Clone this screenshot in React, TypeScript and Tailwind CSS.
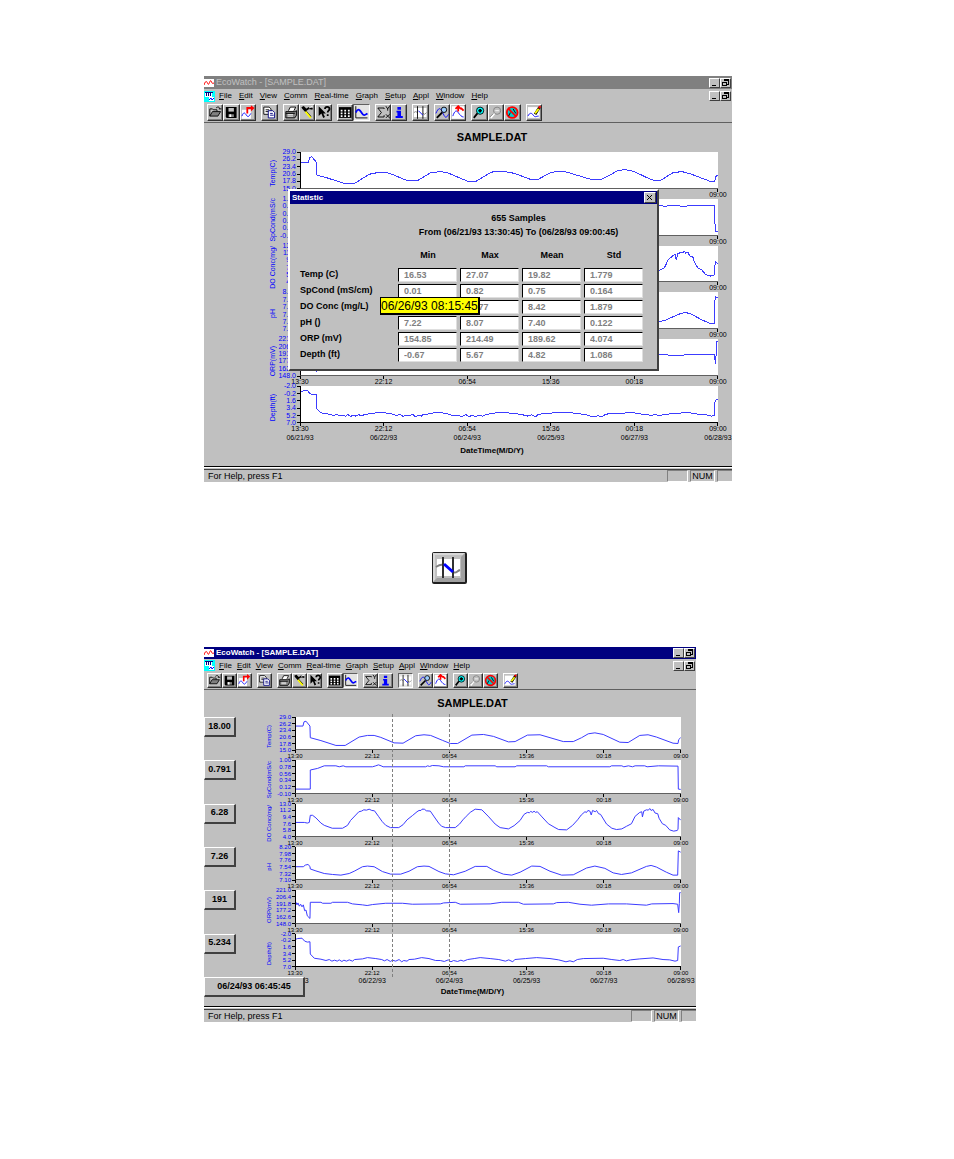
import React from 'react';
import clsx from 'clsx';

type Series = {
  axis: string;
  ticks: string[];
  points: string;
  reading: string;
};

const SERIES: Series[] = [
  {
    axis: 'Temp(C)',
    ticks: ['29.0', '26.2', '23.4', '20.6', '17.8', '15.0'],
    reading: '18.00',
    points:
      '0,28 21,28 24,15 30,13 42,28 43,64 75,73 120,88 148,88 190,62 215,57 235,57 255,63 295,80 322,81 360,58 385,55 405,57 440,72 464,82 486,82 529,56 564,54 594,60 639,77 659,76 696,56 734,55 804,76 834,76 859,64 879,52 899,49 924,54 974,78 999,79 1034,57 1059,55 1084,62 1134,81 1149,82 1151,70 1157,64',
  },
  {
    axis: 'SpCond(mS/c',
    ticks: ['1.00', '0.78', '0.56', '0.34', '0.12', '-0.10'],
    reading: '0.791',
    points:
      '0,90 43,90 43,31 65,26 85,18 120,18 130,21 142,18 150,21 230,21 240,18 248,15 256,18 262,21 390,21 396,18 402,20 410,17 430,18 444,21 505,21 509,18 599,18 604,21 659,21 664,18 754,18 759,21 944,21 949,18 980,18 986,21 1000,18 1012,21 1020,18 1049,18 1056,21 1090,18 1149,19 1150,90 1157,91',
  },
  {
    axis: 'DO Conc(mg/',
    ticks: ['13.0', '11.2', '9.4', '7.6', '5.8', '4.0'],
    reading: '6.28',
    points:
      '0,57 25,57 34,59 40,57 43,35 50,35 60,43 75,59 85,66 109,75 140,75 155,66 164,51 189,24 197,22 204,18 212,19 220,16 228,20 236,21 248,38 259,54 270,66 284,73 309,73 322,64 334,49 350,36 364,24 370,20 376,20 379,16 386,16 392,21 404,22 416,40 429,59 438,69 450,73 479,73 492,62 502,49 512,38 524,26 539,16 559,18 580,40 599,62 614,73 639,77 656,67 674,51 686,32 696,26 702,27 706,23 712,26 716,22 720,26 726,24 740,40 759,61 779,73 790,79 814,80 832,66 847,49 858,34 869,24 874,26 878,20 884,22 888,34 892,20 900,24 904,20 910,30 916,32 934,62 950,75 964,79 980,77 994,69 1009,61 1020,38 1034,26 1040,24 1042,40 1046,22 1054,18 1060,19 1064,14 1068,20 1074,17 1080,28 1088,30 1092,44 1102,61 1112,66 1124,80 1136,84 1146,82 1149,79 1150,42 1157,50',
  },
  {
    axis: 'pH',
    ticks: ['8.20', '7.98', '7.76', '7.54', '7.32', '7.10'],
    reading: '7.26',
    points:
      '0,61 22,61 28,56 36,54 42,60 43,68 60,74 85,82 110,85 135,87 160,82 175,75 200,61 215,59 235,61 260,76 285,84 315,84 340,75 365,61 385,59 400,60 430,76 449,83 474,86 509,75 539,60 574,60 594,72 624,84 649,87 674,78 709,59 734,60 764,75 799,87 834,86 874,65 899,59 929,66 954,80 979,85 1009,80 1054,60 1068,57 1084,62 1114,78 1134,87 1148,87 1150,12 1157,16',
  },
  {
    axis: 'ORP(mV)',
    ticks: ['221.0', '206.4', '191.8', '177.2', '162.6', '148.0'],
    reading: '191',
    points:
      '0,38 3,46 6,40 10,50 14,44 18,52 22,46 26,64 30,62 34,80 42,88 43,38 75,38 80,41 105,41 110,38 155,38 170,43 200,46 214,48 230,45 270,41 320,41 350,44 434,43 444,40 479,38 494,44 584,43 619,38 669,38 684,44 774,43 784,39 819,38 854,44 889,47 940,43 994,43 1054,47 1070,43 1134,42 1148,44 1151,70 1153,42 1154,8 1157,8',
  },
  {
    axis: 'Depth(ft)',
    ticks: ['-2.0', '-0.2', '1.6', '3.4', '5.2', '7.0'],
    reading: '5.234',
    points:
      '0,16 5,14 18,13 26,22 34,25 42,24 43,62 55,75 75,78 90,82 100,79 108,84 116,81 124,84 130,80 138,85 144,81 152,84 160,80 170,84 176,79 200,77 215,73 240,76 258,79 266,83 274,79 284,85 290,81 300,84 310,79 318,86 324,82 334,84 340,79 356,78 378,73 400,76 420,82 434,82 446,85 458,80 466,86 474,82 486,85 496,81 504,84 516,79 536,76 554,73 584,76 610,79 630,84 640,80 652,86 658,79 690,76 724,73 764,76 790,80 812,86 824,83 834,86 846,79 864,76 924,75 950,79 974,82 984,79 994,83 1006,80 1034,77 1074,74 1104,79 1124,80 1140,84 1148,82 1150,40 1157,37',
  },
];

const TIMES = ['13:30', '22:12', '06:54', '15:36', '00:18', '09:00'];
const DATES = ['06/21/93', '06/22/93', '06/24/93', '06/25/93', '06/27/93', '06/28/93'];
const MENU = ['File', 'Edit', 'View', 'Comm', 'Real-time', 'Graph', 'Setup', 'Appl', 'Window', 'Help'];

const STATS: { name: string; values: string[] }[] = [
  { name: 'Temp (C)', values: ['16.53', '27.07', '19.82', '1.779'] },
  { name: 'SpCond (mS/cm)', values: ['0.01', '0.82', '0.75', '0.164'] },
  { name: 'DO Conc (mg/L)', values: ['5.46', '12.77', '8.42', '1.879'] },
  { name: 'pH ()', values: ['7.22', '8.07', '7.40', '0.122'] },
  { name: 'ORP (mV)', values: ['154.85', '214.49', '189.62', '4.074'] },
  { name: 'Depth (ft)', values: ['-0.67', '5.67', '4.82', '1.086'] },
];
const STAT_COLUMNS = ['Min', 'Max', 'Mean', 'Std'];

type ToolId =
  | 'open' | 'save' | 'export' | 'copy' | 'print' | 'tools' | 'context' | 'grid' | 'graph'
  | 'sigma' | 'info' | 'limits' | 'zoomgraph' | 'center' | 'zoomin' | 'zoomout' | 'nozoom' | 'edit';

const TOOLS: (ToolId | null)[] = [
  'open', 'save', 'export', null, 'copy', null, 'print', 'tools', 'context', null, 'grid', 'graph', null,
  'sigma', 'info', null, 'limits', null, 'zoomgraph', 'center', null, 'zoomin', 'zoomout', 'nozoom', null, 'edit',
];

const GLYPHS: Record<ToolId, React.ReactNode> = {
  open: (
    <>
      <path d="M2 12V4h3l1 1h4v2" stroke="#000" />
      <path d="M2 12l3-5h9l-3 5z" fill="#808080" stroke="#000" />
      <path d="M9 3c2-2 4-1 4 1M12 4h3" stroke="#000" />
    </>
  ),
  save: (
    <>
      <path d="M2 2h12v12H3l-1-1z" fill="#000" />
      <path d="M5 3h6v4H5z" fill="#c0c0c0" />
      <path d="M5 10h6v3H5z" fill="#808080" />
      <path d="M6 10h2v3H6z" fill="#fff" />
    </>
  ),
  export: (
    <>
      <path d="M1 5h10v10H1z" fill="#fff" />
      <path d="M1 12c2-5 3-4 5-1s3 1 5-2" stroke="#00f" />
      <path d="M7 9V3h6" stroke="#f00" strokeWidth="2" />
      <path d="M11 0l4 3-4 4z" fill="#f00" />
    </>
  ),
  copy: (
    <>
      <path d="M2 2h6l2 2v6H2z" fill="#fff" stroke="#000" />
      <path d="M4 5h4M4 7h4" stroke="#000" />
      <path d="M7 6h5l2 2v6H7z" fill="#fff" stroke="#000080" />
      <path d="M9 9h3M9 11h4" stroke="#000080" />
    </>
  ),
  print: (
    <>
      <path d="M5 6l2-4h6l-2 4" fill="#fff" stroke="#000" />
      <path d="M2 7h10l2-1v5l-2 3H2z" fill="#808080" stroke="#000" />
      <path d="M4 10h6M4 12h6" stroke="#fff" />
      <path d="M2 9h10" stroke="#000" />
    </>
  ),
  tools: (
    <>
      <path d="M2 3l2-1 3 3 3-2 4 1M3 3l9 10" stroke="#000" strokeWidth="2" />
      <path d="M6 7l6 7" stroke="#ff0" strokeWidth="2" />
      <path d="M10 3l4-2" stroke="#fff" />
    </>
  ),
  context: (
    <>
      <path d="M3 1v11l3-3 2 5 2-1-2-4h3z" fill="#000" />
      <path d="M10 4c0-3 5-3 5 0 0 2-2 2-2 4M13 10v2" stroke="#000" strokeWidth="2" />
    </>
  ),
  grid: (
    <>
      <path d="M1 2h14v12H1z" fill="#000" />
      <path d="M3 5h2v2H3zM7 5h2v2H7zM11 5h2v2h-2zM3 8h2v2H3zM7 8h2v2H7zM11 8h2v2h-2zM3 11h2v2H3zM7 11h2v2H7zM11 11h2v2h-2z" fill="#fff" />
    </>
  ),
  graph: (
    <>
      <path d="M2 1v13h13" stroke="#000" />
      <path d="M2 8c3-6 5-2 7 1s3 2 6 0" stroke="#00f" strokeWidth="2" />
    </>
  ),
  sigma: (
    <>
      <path d="M9 4V3H2l4 5-4 5h7v-2" stroke="#000" />
      <path d="M11 1l2 3 2-3M13 4v2M11 10l4 4M15 10l-4 4" stroke="#000" />
    </>
  ),
  info: <path d="M6 2h4v3H6zM5 6h5v6h2v2H4v-2h2V8H5z" fill="#00f" />,
  limits: (
    <>
      <path d="M1 3h14v10H1z" fill="#fff" />
      <path d="M1 8l2-1 2 1M11 9l2 1 2-2" stroke="#808080" />
      <path d="M5 1v14M11 1v14" stroke="#000" />
      <path d="M6 6l5 5" stroke="#00f" />
    </>
  ),
  zoomgraph: (
    <>
      <path d="M1 9c3-7 5-7 8 0s4 4 6 1" stroke="#00f" />
      <circle cx="10" cy="5" r="3" fill="#9cf" stroke="#000" />
      <path d="M8 8l-6 6" stroke="#000" strokeWidth="2" />
    </>
  ),
  center: (
    <>
      <path d="M1 1h14v14H1z" fill="#fff" />
      <path d="M2 12c2-6 4-7 6-4s4 5 6 5" stroke="#00f" />
      <path d="M8 1v6M5 4l3-3 3 3M11 3l3 3" stroke="#f00" strokeWidth="2" />
    </>
  ),
  zoomin: (
    <>
      <circle cx="9" cy="6" r="4" fill="#0ff" stroke="#000" />
      <path d="M9 4v4M7 6h4M6 9l-4 5" stroke="#000" strokeWidth="2" />
    </>
  ),
  zoomout: (
    <>
      <circle cx="9" cy="6" r="4" fill="#c0c0c0" stroke="#808080" />
      <path d="M7 6h4" stroke="#fff" />
      <path d="M6 9l-4 5" stroke="#fff" strokeWidth="2" />
      <path d="M5 9l-4 4" stroke="#808080" />
    </>
  ),
  nozoom: (
    <>
      <circle cx="8" cy="8" r="6" fill="#0cc" stroke="#f00" strokeWidth="2" />
      <path d="M6 8l-2 4M9 4l3 5" stroke="#000" />
      <path d="M4 4l8 8" stroke="#f00" strokeWidth="2" />
    </>
  ),
  edit: (
    <>
      <path d="M1 2h13v12H1z" fill="#fff" />
      <path d="M1 12c2-4 4-4 6-1s3 1 6 1" stroke="#00f" />
      <path d="M14 2L9 10" stroke="#000" strokeWidth="3" />
      <path d="M13 4L9 9" stroke="#ff0" strokeWidth="2" />
      <path d="M15 1l-2 2" stroke="#f00" strokeWidth="2" />
    </>
  ),
};

const RAISED = 'border border-t-white border-l-white border-r-[#404040] border-b-[#404040] bg-[#c0c0c0]';

function ToolButton({ id, pressed }: { id: ToolId; pressed: boolean }) {
  return (
    <button
      type="button"
      aria-label={id}
      aria-pressed={pressed}
      className={clsx(
        'flex-1 min-w-0 h-full border',
        pressed
          ? 'border-t-[#606060] border-l-[#606060] border-r-white border-b-white bg-[#e4e4e4]'
          : 'border-t-white border-l-white border-r-[#303030] border-b-[#303030] bg-[#c0c0c0] shadow-[inset_-1px_-1px_0_#808080]',
      )}
    >
      <svg viewBox="0 0 16 16" fill="none" className="w-full h-full block">
        {GLYPHS[id]}
      </svg>
    </button>
  );
}

function WindowControls() {
  return (
    <div className="flex">
      <button type="button" aria-label="Minimize" className={clsx('w-[11px] h-[10px]', RAISED)}>
        <svg viewBox="0 0 9 8" className="w-full h-full block" shapeRendering="crispEdges">
          <path d="M2 6h4v1H2z" />
        </svg>
      </button>
      <button type="button" aria-label="Restore" className={clsx('w-[11px] h-[10px]', RAISED)}>
        <svg viewBox="0 0 9 8" className="w-full h-full block" fill="none" shapeRendering="crispEdges">
          <path d="M3 0h5v2H3z" fill="#000" />
          <path d="M7.5 2v3H6M1.5 3.5h4v3h-4z" stroke="#000" />
        </svg>
      </button>
    </div>
  );
}

function PlotRow({ series, live, axisClass }: { series: Series; live: boolean; axisClass: string }) {
  return (
    <div className="flex flex-1 min-h-0">
      <div className={live ? 'w-[60px]' : 'w-[64px]'}>
        {live && (
          <output className={clsx('flex w-[32px] h-[20px] items-center justify-center border-b-2 border-r-2 text-[9px] font-bold', RAISED)}>
            {series.reading}
          </output>
        )}
      </div>
      <div
        className={clsx(
          'w-[10px] flex items-center justify-center leading-[8px] text-[#0000ff]',
          live ? 'text-[6px]' : 'text-[7px]',
        )}
      >
        <span className="[writing-mode:vertical-rl] rotate-180 whitespace-nowrap pt-[4px]">{series.axis}</span>
      </div>
      <div
        className={clsx(
          'flex flex-col justify-between pb-[10px] leading-[6px] text-[#0000ff]',
          live ? 'w-[21px] text-[6px]' : 'w-[22px] text-[7px]',
        )}
      >
        {series.ticks.map((tick) => (
          <div key={tick} className="h-0 flex items-center justify-end gap-px">
            <span>{tick}</span>
            <span className="w-[3px] h-px shrink-0 bg-black" />
          </div>
        ))}
      </div>
      <div className="flex-1 min-w-0 flex flex-col">
        <div className={clsx('flex-1 min-h-0 bg-white border-l border-l-black border-b', axisClass)}>
          <svg viewBox="0 0 1158 100" preserveAspectRatio="none" fill="none" className="w-full h-full block" shapeRendering="crispEdges">
            <polyline points={series.points} stroke="#3c3cff" strokeWidth="1" vectorEffect="non-scaling-stroke" />
          </svg>
        </div>
        <div className="h-[10px] flex justify-between">
          {TIMES.map((time) => (
            <div key={time} className={clsx('w-0 flex flex-col items-center leading-[6px]', live ? 'text-[6px]' : 'text-[7px]')}>
              <span className="w-px h-[3px] shrink-0 bg-black" />
              <span>{time}</span>
            </div>
          ))}
        </div>
      </div>
      <div className={live ? 'w-[15px]' : 'w-[14px]'} />
    </div>
  );
}

function StatisticDialog() {
  return (
    <section
      role="dialog"
      aria-label="Statistic"
      className="absolute left-[84px] top-[113px] w-[371px] h-[182px] flex flex-col bg-[#c0c0c0] border-2 border-t-white border-l-white border-r-[#404040] border-b-[#404040]"
    >
      <header className="h-[13px] shrink-0 flex items-center justify-between bg-[#000080] pl-[2px] pr-px text-[8px] font-bold text-white">
        <span>Statistic</span>
        <button type="button" aria-label="Close" className={clsx('w-[12px] h-[11px]', RAISED)}>
          <svg viewBox="0 0 10 9" fill="none" className="w-full h-full block">
            <path d="M2 2l5 5M7 2L2 7" stroke="#000" />
          </svg>
        </button>
      </header>
      <div className="pt-[7px] pl-[90px] text-center text-[9px] leading-[14px] font-bold">
        <p>655 Samples</p>
        <p>From (06/21/93 13:30:45) To (06/28/93 09:00:45)</p>
      </div>
      <table className="mt-[9px] ml-[10px] w-[346px] table-fixed border-collapse text-[9px] font-bold">
        <thead>
          <tr className="h-[20px] align-top">
            <td className="w-[98px] p-0" />
            {STAT_COLUMNS.map((col) => (
              <th key={col} scope="col" className="p-0 pr-[2px] leading-[14px]">
                {col}
              </th>
            ))}
          </tr>
        </thead>
        <tbody>
          {STATS.map(({ name, values }) => (
            <tr key={name} className="h-[16px]">
              <th scope="row" className="p-0 pb-[3px] text-left leading-[9px] whitespace-nowrap">
                {name}
              </th>
              {values.map((value, i) => (
                <td key={STAT_COLUMNS[i]} className="p-0 pr-[3px] align-top">
                  <input
                    readOnly
                    aria-label={`${name} ${STAT_COLUMNS[i]}`}
                    defaultValue={value}
                    className="block w-full h-[14px] rounded-none bg-white pl-[5px] text-[9px] leading-[9px] font-bold text-[#808080] border border-t-black border-l-black border-r-[#dfdfdf] border-b-[#dfdfdf]"
                  />
                </td>
              ))}
            </tr>
          ))}
        </tbody>
      </table>
      <div
        role="tooltip"
        className="absolute left-[90px] top-[106px] h-[18px] flex items-center whitespace-nowrap border border-r-2 border-b-2 border-black bg-[#ffff00] text-[12px] leading-[12px]"
      >
        06/26/93 08:15:45
      </div>
    </section>
  );
}

function EcoWatchWindow({ live, children }: { live: boolean; children?: React.ReactNode }) {
  return (
    <section className={clsx('relative w-full overflow-hidden bg-[#c0c0c0] text-black', live ? 'max-w-[492px]' : 'max-w-[528px]')}>
      <header
        className={clsx(
          'flex items-center justify-between pr-px',
          live ? 'h-[12px] bg-[#000080] text-[8px] font-bold text-white' : 'h-[13px] bg-[#808080] text-[9px] text-[#c0c0c0]',
        )}
      >
        <div className="flex items-center gap-[2px]">
          <svg viewBox="0 0 10 10" className="w-[10px] h-[10px]" fill="none">
            <path d="M0 1h10v8H0z" fill="#fff" />
            <path d="M0 7c2-6 3-3 4-1s2-5 3-3 1 3 3 2" stroke="#f00" />
          </svg>
          <span>EcoWatch - [SAMPLE.DAT]</span>
        </div>
        <WindowControls />
      </header>

      <div className={clsx('flex items-center justify-between pr-px text-[8px]', live ? 'h-[13px]' : 'h-[14px]')}>
        <div className="flex items-center gap-[4px]">
          <svg viewBox="0 0 11 11" className="w-[11px] h-[11px]" fill="none">
            <path d="M0 0h11v11H0z" fill="#0ff" />
            <path d="M1 1h7v5H1z" fill="#fff" />
            <path d="M1 1h8v1H1zM2 2h1v3H2zM4 2h1v3H4zM6 2h1v3H6z" fill="#000080" />
            <path d="M5 6h5v4H5z" fill="#fff" />
            <path d="M5 9l2-2 1 2 2-2" stroke="#00f" />
          </svg>
          <nav className={clsx('flex items-center', live ? 'gap-[5px]' : 'gap-[7px]')}>
            {MENU.map((item) => (
              <button key={item} type="button">
                <u>{item[0]}</u>
                {item.slice(1)}
              </button>
            ))}
          </nav>
        </div>
        <WindowControls />
      </div>

      <div className={clsx('flex items-center border-b border-[#606060] pl-[3px]', live ? 'h-[18px]' : 'h-[20px]')}>
        <div className={clsx('flex w-full', live ? 'h-[15px] max-w-[311px]' : 'h-[17px] max-w-[335px]')}>
          {TOOLS.map((tool, i) =>
            tool ? (
              <ToolButton key={tool} id={tool} pressed={tool === 'graph' || (live && tool === 'limits')} />
            ) : (
              <span key={i} className="w-[5px] shrink-0" />
            ),
          )}
        </div>
      </div>

      <h2 className={clsx('flex items-center justify-center text-[11px] font-bold', live ? 'h-[27px] pl-[45px]' : 'h-[29px] pl-[48px]')}>
        SAMPLE.DAT
      </h2>

      <div className="relative">
        <div className={clsx('flex flex-col', live ? 'h-[260px]' : 'h-[281px]')}>
          {SERIES.map((series, i) => (
            <PlotRow
              key={series.axis}
              series={series}
              live={live}
              axisClass={i === SERIES.length - 1 ? 'border-b-black' : 'border-b-[#606060]'}
            />
          ))}
        </div>
        {live && (
          // dashed cursor limits, laid over the plots
          <div className="absolute top-[-3px] bottom-0 left-[91px] right-[15px] pointer-events-none">
            <div className="absolute inset-y-0 left-[25%] border-l border-dashed border-[#808080]" />
            <div className="absolute inset-y-0 left-[40%] border-l border-dashed border-[#808080]" />
          </div>
        )}
      </div>

      <div className="relative">
        <div className={clsx('flex justify-between text-[7px]', live ? 'h-[8px] pl-[91px] pr-[15px] leading-[7px]' : 'h-[10px] pl-[96px] pr-[14px] leading-[9px]')}>
          {DATES.map((date) => (
            <span key={date} className="w-0 flex justify-center">
              {date}
            </span>
          ))}
        </div>
        <p className={clsx('text-center text-[8px] font-bold', live ? 'h-[14px] leading-[14px] pl-[45px]' : 'h-[16px] leading-[16px] pl-[48px]')}>
          DateTime(M/D/Y)
        </p>
        {live && (
          <output className={clsx('absolute left-0 top-0 w-[101px] h-[20px] flex items-center justify-center border-b-2 border-r-2 text-[9px] font-bold', RAISED)}>
            06/24/93 06:45:45
          </output>
        )}
      </div>

      <footer className="mt-[7px] border-t border-black">
        <div className="h-[3px] border-t border-t-white border-b border-b-[#404040]" />
        <div className="h-[12px] flex items-center gap-[2px] pl-[4px] text-[9px] leading-[12px]">
          <span className="flex-1">For Help, press F1</span>
          <span className="w-[21px] h-full border border-t-[#808080] border-l-[#808080] border-r-white border-b-white" />
          <span className="w-[25px] h-full text-center leading-[11px] border border-t-[#808080] border-l-[#808080] border-r-white border-b-white">
            NUM
          </span>
          <span className="w-[15px] h-full border border-r-0 border-t-[#808080] border-l-[#808080] border-b-white" />
        </div>
      </footer>
      {children}
    </section>
  );
}

export default function App() {
  return (
    <main className="min-h-screen bg-white pt-[76px] pb-[137px] pl-[204px] pr-4 font-['Liberation_Sans',Arial,sans-serif]">
      <EcoWatchWindow live={false}>
        <StatisticDialog />
      </EcoWatchWindow>

      <button
        type="button"
        aria-label="Limits"
        className="block mt-[70px] mb-[63px] ml-[228px] w-[35px] h-[32px] rounded-xs border border-r-2 border-b-2 border-[#202020] bg-[#c0c0c0]"
      >
        <svg viewBox="0 0 32 29" fill="none" className="w-full h-full block">
          <path d="M0 29V0h32l-2 2H2v25z" fill="#d8d8d8" />
          <path d="M32 0v29H0l4-4h24V4z" fill="#a0a0a0" />
          <path d="M4 6h23v17H4z" fill="#fff" />
          <path d="M3 14c3-2 4-3 7-2M20 19c3 2 4-1 7-2" stroke="#808080" strokeWidth="2" />
          <path d="M10 4v21M20 4v21" stroke="#303030" strokeWidth="2" />
          <path d="M11 11l9 8" stroke="#00f" strokeWidth="3" />
        </svg>
      </button>

      <EcoWatchWindow live />
    </main>
  );
}
